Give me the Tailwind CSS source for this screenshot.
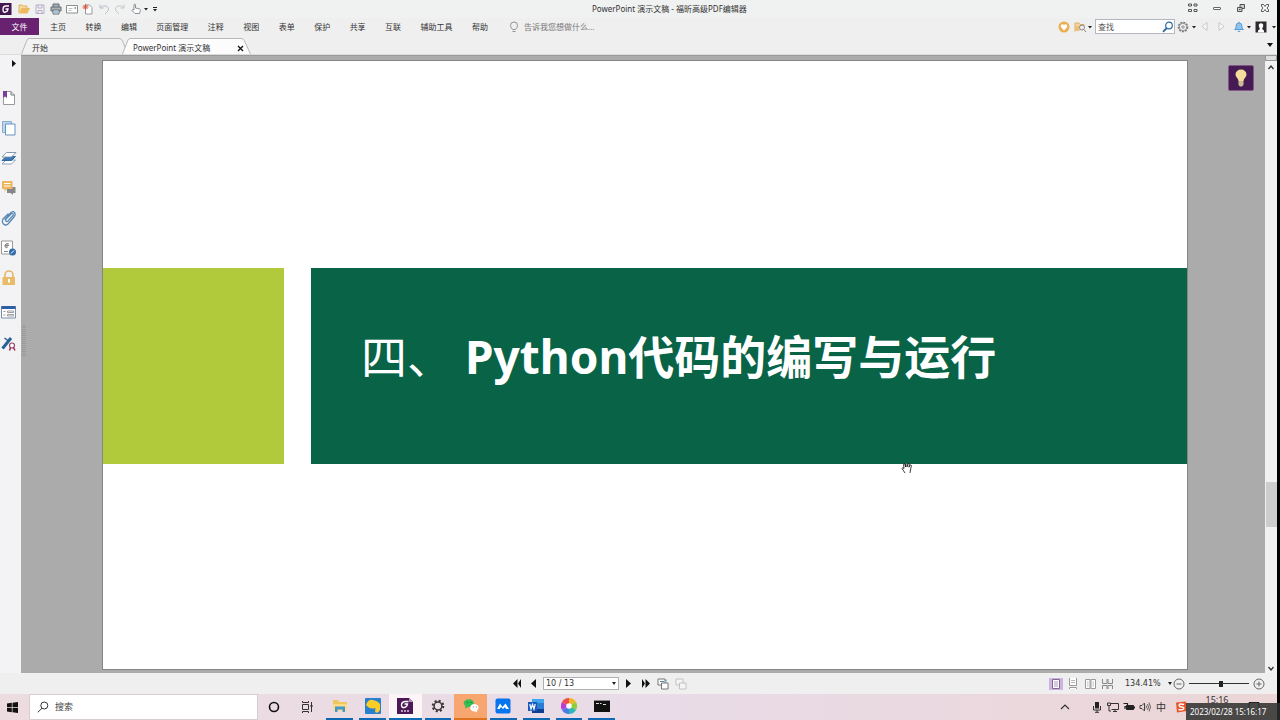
<!DOCTYPE html>
<html lang="zh-CN">
<head>
<meta charset="utf-8">
<meta name="viewport" content="width=device-width, initial-scale=1">
<title>PowerPoint 演示文稿 - 福昕高级PDF编辑器</title>
<script src="https://cdn.jsdelivr.net/npm/@tailwindcss/browser@4"></script>
</head>
<body class="bg-black font-['Noto_Sans','Noto_Sans_CJK_SC',sans-serif] text-[8px] leading-3 text-[#333]">
<div class="relative flex h-screen flex-col overflow-hidden pr-[3px]">

  <!-- Title bar -->
  <header class="flex h-[18px] shrink-0 items-center bg-[#f0f1f1]">
    <div class="flex w-[592px] shrink-0 items-center">
      <svg class="mr-1 h-3 w-3" viewBox="0 0 12 12"><rect width="11.500" height="12" fill="#43174f"/><path d="M9 3H6Q3 3 3 6.500T5.500 9Q7.500 9 8 6H5.500" fill="none" stroke="#fff" stroke-width="1.400"/></svg>
      <button class="flex w-4 justify-center" aria-label="打开"><svg class="h-3 w-3" viewBox="0 0 12 12"><path d="M1 10V2h3l1 1h4v2" fill="#f6d9a0" stroke="#e3b15c"/><path d="M1 10.500L3.500 5H12L9.500 10.500z" fill="#edb95e"/></svg></button>
      <button class="flex w-4 justify-center" aria-label="保存"><svg class="h-3 w-3" viewBox="0 0 12 12" fill="none" stroke="#b9adc8"><path d="M2 2h8v8.500H2z"/><path d="M4 2v3h4V2M4 10.500V7.500h4v3"/></svg></button>
      <button class="flex w-4 justify-center" aria-label="打印"><svg class="h-3 w-3" viewBox="0 0 12 12"><path d="M3 4V1h6v3M3 8H1V4h10v4H9" fill="#aab3b8" stroke="#606a70"/><path d="M3 7h6v4H3z" fill="#fff" stroke="#606a70"/><path d="M4 9h4" stroke="#3c82b8"/></svg></button>
      <button class="flex w-4 justify-center" aria-label="邮件"><svg class="h-3 w-3" viewBox="0 0 12 12"><path d="M.5 2.500h11v7.500H.5z" fill="#fff" stroke="#8d8d8d"/><path d="M2.500 5.500h4M2.500 7.500h3" stroke="#bbb"/><path d="M8.500 4h1.500v2H8.500z" fill="#99a"/></svg></button>
      <button class="flex w-4 justify-center" aria-label="新建"><svg class="h-3 w-3" viewBox="0 0 12 12"><path d="M3.500 2h4L10 4.500V11H3.500z" fill="#fff" stroke="#999"/><path d="M3.500 1v6M.5 4h6M1.500 2l4 4M5.500 2l-4 4" stroke="#d4563e"/></svg></button>
      <button class="flex w-4 justify-center" aria-label="撤销"><svg class="h-3 w-3" viewBox="0 0 12 12" fill="none" stroke="#b9bfc6"><path d="M2 1.500v3.500h3.500M2 5Q4.500 2 8 3t2 5L7 11"/></svg></button>
      <button class="flex w-4 justify-center" aria-label="重做"><svg class="h-3 w-3" viewBox="0 0 12 12" fill="none" stroke="#c3c8cd"><path d="M10 1.500v3.500H6.500M10 5Q7.500 2 4 3t-2 5L5 11"/></svg></button>
      <button class="flex w-4 justify-center" aria-label="手型工具"><svg class="h-3 w-3" viewBox="0 0 12 12"><path d="M4 7V1.500q1-1 1.500 0V5l4 .8q1 .4.800 1.700L9.500 10.500H5L2 7.500q0-1.500 2-.5z" fill="#fff" stroke="#707880" stroke-width=".8"/></svg></button>
      <svg class="h-1 w-[5px]" viewBox="0 0 5 4"><path d="M0 1h4L2 3.500z" fill="#222"/></svg>
      <svg class="ml-1 h-[5px] w-[5px]" viewBox="0 0 5 5"><path d="M0 .5h4" stroke="#222"/><path d="M0 2h4L2 4.500z" fill="#222"/></svg>
    </div>
    <h1 class="whitespace-nowrap">PowerPoint 演示文稿 - 福昕高级PDF编辑器</h1>
    <div class="ml-auto flex items-center pb-0.5">
      <button class="flex w-6 justify-center" aria-label="布局"><svg class="h-[10px] w-[10px]" viewBox="0 0 10 10" fill="none" stroke="#444"><path d="M.5 1h3v2h-3zM6 1h3v2H6zM.5 6.500h3v2h-3zM6 6.500h3v2H6z" stroke-width=".9"/></svg></button>
      <button class="flex w-6 justify-center" aria-label="最小化"><svg class="h-[10px] w-[10px]" viewBox="0 0 10 10"><rect x="1.500" y="4.500" width="7" height="2" rx=".5" fill="#fff" stroke="#555" stroke-width=".9"/></svg></button>
      <button class="flex w-6 justify-center" aria-label="还原"><svg class="h-[10px] w-[10px]" viewBox="0 0 10 10" fill="#ccc" stroke="#444" stroke-width=".9"><path d="M4 1.500h4.500v4H4z"/><path d="M1.500 4.500H6v4H1.500z"/><path d="M3 6.500h1.500"/></svg></button>
      <button class="flex w-6 justify-center" aria-label="关闭"><svg class="h-[10px] w-[10px]" viewBox="0 0 10 10"><path d="M1.500 1.500h2L5 3.500l1.500-2h2v1.500L7 5l1.500 2v1.500h-2L5 6.500l-1.500 2h-2V7L3 5 1.500 3z" fill="#fff" stroke="#444" stroke-width=".9"/></svg></button>
    </div>
  </header>

  <!-- Menu bar -->
  <div class="flex h-[19px] shrink-0 items-start bg-[#efefef]">
    <button class="h-[17px] w-[39px] bg-[#69226f] text-white">文件</button>
    <nav class="ml-[11px] flex h-[18px] w-[438px] items-center justify-between whitespace-nowrap" aria-label="菜单">
      <button>主页</button><button>转换</button><button>编辑</button><button>页面管理</button><button>注释</button><button>视图</button><button>表单</button><button>保护</button><button>共享</button><button>互联</button><button>辅助工具</button><button>帮助</button>
    </nav>
    <label class="ml-5 flex h-[18px] items-center gap-1 text-[#777]">
      <svg class="h-3 w-3" viewBox="0 0 12 12" fill="none" stroke="#888" stroke-width=".9"><path d="M4.500 8.500Q2.500 6.500 2.500 4.500a3.500 3.500 0 0 1 7 0q0 2-2 4zM4.500 10.500h3"/></svg>
      <input class="w-24 placeholder:text-[#777]" placeholder="告诉我您想做什么..." aria-label="告诉我您想做什么">
    </label>
    <div class="ml-auto flex h-[17px] items-center pr-px">
      <button aria-label="收藏"><svg class="mr-1 h-3 w-3" viewBox="0 0 12 12"><circle cx="6" cy="6" r="5.500" fill="#ebae50"/><path d="M6 9.500L3 6.300Q2.300 3.500 4.500 3.300 5.500 3.300 6 4.300 6.500 3.300 7.500 3.300 9.700 3.500 9 6.300z" fill="#fff"/></svg></button>
      <button aria-label="高级查找"><svg class="h-3 w-[13px]" viewBox="0 0 13 12"><path d="M1 10.500V2h4l1 1.500h4V5" fill="#f5d7a0" stroke="#ddb068"/><path d="M1.500 5h4v5h-4z" fill="#edbf6e"/><circle cx="8" cy="6.500" r="2.500" fill="#eee" stroke="#888"/><path d="M9.800 8.500l2.200 2.500" stroke="#888"/></svg></button>
      <svg class="mx-px h-1 w-1" viewBox="0 0 4 4"><path d="M0 1h4L2 3.500z" fill="#222"/></svg>
      <label class="ml-0.5 flex h-[15px] w-20 items-center border border-[#b5b8c2] bg-white">
        <input class="w-[66px] pl-0.5 placeholder:text-[#555]" placeholder="查找" aria-label="查找">
        <svg class="h-3 w-3 shrink-0" viewBox="0 0 12 12" fill="none" stroke="#2c6ca3"><circle cx="7" cy="4.500" r="3.300" stroke-width="1.200"/><path d="M4.700 7L1 10.800" stroke-width="1.800"/></svg>
      </label>
      <button class="ml-px" aria-label="设置"><svg class="h-[14px] w-[14px]" viewBox="0 0 14 14" fill="none" stroke="#777"><circle cx="7" cy="7" r="4.500" stroke-dasharray="2 1" stroke-width="1.600"/><circle cx="7" cy="7" r="3.700" fill="#eee" stroke-width=".7"/><circle cx="7" cy="7" r="1.200" stroke-width=".8"/></svg></button>
      <svg class="ml-0.5 h-1 w-1" viewBox="0 0 4 4"><path d="M0 1h4L2 3.500z" fill="#222"/></svg>
      <button class="flex w-[17px] justify-center" aria-label="上一个"><svg class="h-[9px] w-[7px]" viewBox="0 0 7 9"><path d="M6 .5v8L1 4.500z" fill="#f8f8f8" stroke="#c4c4c4" stroke-width=".9"/></svg></button>
      <button class="flex w-[17px] justify-center" aria-label="下一个"><svg class="h-[9px] w-[7px]" viewBox="0 0 7 9"><path d="M1 .5v8l5-4z" fill="#f8f8f8" stroke="#c4c4c4" stroke-width=".9"/></svg></button>
      <button class="ml-[3px]" aria-label="通知"><svg class="h-3 w-3" viewBox="0 0 12 12"><path d="M1.500 8.500L3 7V5a3 3 0 0 1 6 0v2l1.500 1.500z" fill="#8fc3ec" stroke="#4b95d0" stroke-width=".9"/><path d="M6 .7V2M4.800 10.300h2.400" stroke="#4b95d0"/></svg></button>
      <svg class="ml-0.5 mr-1 h-1 w-1" viewBox="0 0 4 4"><path d="M0 1h4L2 3.500z" fill="#222"/></svg>
      <button aria-label="账户"><svg class="h-3 w-3" viewBox="0 0 12 12"><path d="M.5.5h11v11H.5z" fill="#2e2a30"/><path d="M6 2.200Q8.500 2.200 8.200 5 8 6.500 7.300 7v1.200L9 9.500v2H3v-2l1.700-1.300V7Q4 6.500 3.800 5 3.500 2.200 6 2.200z" fill="#fff"/></svg></button>
      <svg class="ml-[5px] h-1 w-1" viewBox="0 0 4 4"><path d="M0 1h4L2 3.500z" fill="#222"/></svg>
    </div>
  </div>

  <!-- Document tabs -->
  <div class="flex h-[18px] shrink-0 items-end border-b border-[#dcdcdc] bg-[#efefef] pl-[21px]">
    <button class="relative h-4 w-[107px] pl-[11px] pt-1 text-left">
      <svg class="absolute inset-0 h-full w-full" viewBox="0 0 107 16" preserveAspectRatio="none"><path d="M.5 16L6 2Q7 .5 8 .5H98Q100 .5 101 2L107 16" fill="#f2f2f2" stroke="#b8b8b8"/></svg>
      <span class="relative block">开始</span>
    </button>
    <div class="relative -ml-[6px] flex h-4 w-[129px] items-center pl-[11px] pr-[7px] pt-1">
      <svg class="absolute inset-0 h-full w-full" viewBox="0 0 129 16" preserveAspectRatio="none"><path d="M.5 16L6 2Q7 .5 8 .5H119Q121 .5 122 2L128.500 16" fill="#fcfcfc" stroke="#b8b8b8"/></svg>
      <button class="relative whitespace-nowrap">PowerPoint 演示文稿</button>
      <button class="relative ml-auto" aria-label="关闭标签"><svg class="h-[7px] w-[7px]" viewBox="0 0 7 7"><path d="M1 1l5 5M6 1L1 6" stroke="#111" stroke-width="1.300"/></svg></button>
    </div>
    <button class="mb-[7px] ml-auto mr-1" aria-label="标签列表"><svg class="h-1 w-[6px]" viewBox="0 0 6 4"><path d="M0 0h6L3 4z" fill="#111"/></svg></button>
  </div>

  <!-- Workspace -->
  <div class="flex min-h-0 flex-1">
    <aside class="flex w-[21px] shrink-0 flex-col bg-[#f3f3f5]" aria-label="导航面板">
      <button class="flex h-7 items-start justify-end pr-[5px] pt-[5px]" aria-label="展开"><svg class="h-[7px] w-1" viewBox="0 0 4 7"><path d="M0 0v7l4-3.500z" fill="#111"/></svg></button>
      <button class="flex h-[30px] items-center pl-px" aria-label="书签"><svg class="h-4 w-4" viewBox="0 0 16 16"><path d="M2.500 1.500h7.500l3.500 3.500v9.500h-11z" fill="#fff" stroke="#999"/><path d="M10 1.500V5h3.500" fill="none" stroke="#777"/><path d="M2 1h4v7L4 6.500 2 8z" fill="#7a3f9a"/></svg></button>
      <button class="flex h-[30px] items-center pl-px" aria-label="页面"><svg class="h-4 w-4" viewBox="0 0 16 16"><path d="M1.500 1.500h9v11h-9z" fill="#bcd8ef" stroke="#86abcf"/><path d="M4.500 4h9.500v11H4.500z" fill="#fff" stroke="#6592bf"/></svg></button>
      <button class="flex h-[30px] items-center pl-px" aria-label="图层"><svg class="h-4 w-4" viewBox="0 0 16 16"><path d="M1 14l4-4h9.500l-4 4z" fill="#fff" stroke="#8aa4bb"/><path d="M1 10.500l4-4h9.500l-4 4z" fill="#3b77b5" stroke="#2e67a5"/><path d="M1 7l4.500-4.500h9.500L10.500 7z" fill="#fff" stroke="#8299ae"/></svg></button>
      <button class="flex h-[30px] items-center pl-px" aria-label="注释"><svg class="h-4 w-4" viewBox="0 0 16 16"><path d="M6 7h8.500v6H12v2l-2.500-2H6z" fill="#878787"/><path d="M1 1h10.500v8H6l-2.500 2.500V9H1z" fill="#edb55c"/><path d="M3 3.500h6.500M3 6h6.500" stroke="#fff"/></svg></button>
      <button class="flex h-[30px] items-center pl-px" aria-label="附件"><svg class="h-4 w-4" viewBox="0 0 16 16" fill="none" stroke="#5b8ab8" stroke-width="1.300" stroke-linecap="round"><path d="M4 9.500l5.500-6.500q2.500-2.500 4-.5t-.5 4.500l-6 7q-2.500 2-4.500 0t-.5-5L7 4M5 11q1 1 2 0l5-5.500q.8-1.500-.3-2t-1.700.5L5 9q-.8 1 0 2z"/></svg></button>
      <button class="flex h-[30px] items-center pl-px" aria-label="签名"><svg class="h-4 w-4" viewBox="0 0 16 16"><path d="M.5 1h11v13H.5z" fill="#fff" stroke="#999"/><path d="M8 4q-3-1.500-4 1t2 3M4 5.500h4M6 4v4M3 11.500h4" fill="none" stroke="#777" stroke-width=".9"/><circle cx="11.500" cy="12" r="3.500" fill="#326da8"/><path d="M10 13.500l3-3" stroke="#fff"/></svg></button>
      <button class="flex h-[30px] items-center pl-px" aria-label="安全"><svg class="h-4 w-4" viewBox="0 0 16 16"><path d="M4 8V5a4 4 0 0 1 8 0v3" fill="none" stroke="#e4b768" stroke-width="1.600"/><path d="M1.500 7h12.500v8H1.500z" fill="#eabb68"/><path d="M7 9h2v3.500H7z" fill="#fff"/></svg></button>
      <button class="mt-1 flex h-[30px] items-center pl-px" aria-label="表单域"><svg class="h-4 w-4" viewBox="0 0 16 16"><path d="M.5 2.500h14v11.500H.5z" fill="#fff" stroke="#7e8fa8"/><path d="M.5 2h14v3H.5z" fill="#2e5fa4"/><path d="M2.500 7.500h2M2.500 11h2" stroke="#999"/><path d="M6.500 7h6v1.500h-6zM6.500 10.500h6V12h-6z" fill="none" stroke="#888" stroke-width=".8"/></svg></button>
      <button class="mt-px flex h-[30px] items-center pl-px" aria-label="数字签名"><svg class="h-4 w-4" viewBox="0 0 16 16"><path d="M1.500 13.500L10 3" stroke="#2a6098" stroke-width="3"/><path d="M3.500 3l4 3" stroke="#2a6098" stroke-width="1.500"/><circle cx="11" cy="10.500" r="2.500" fill="#fff" stroke="#96476c" stroke-width="1.200"/><path d="M9.500 12.500l-1 3M12.500 12.500l1.500 3" stroke="#a02c58" stroke-width="1.500"/></svg></button>
    </aside>

    <main class="relative flex min-w-0 flex-1 border-t border-[#999] bg-[#ababab] pb-1 pl-[82px] pr-[78px] pt-[5px]">
      <svg class="absolute left-px top-[269px] h-8 w-1" viewBox="0 0 4 32"><path d="M1 0v32M3 0v32" stroke="#888" stroke-dasharray="1 1"/></svg>
      <!-- Slide -->
      <article class="grid min-w-0 flex-1 grid-cols-[181fr_27fr_876fr] grid-rows-[207fr_196fr_205fr] bg-white outline outline-[#858585]">
        <div class="col-start-1 row-start-2 bg-[#b0ca3c]"></div>
        <div class="col-start-3 row-start-2 flex items-center bg-[#086347] pb-5 pl-[50px]">
          <h2 class="flex whitespace-nowrap text-[46px] leading-[60px] text-white"><span class="w-[104px]">四、</span><span class="font-bold">Python代码的编写与运行</span></h2>
        </div>
      </article>
      <button class="absolute right-[11px] top-[9px] flex h-[26px] w-[26px] items-center justify-center rounded-xs border border-[#84568c] bg-[#461a52]" aria-label="提示"><svg class="h-[18px] w-3" viewBox="0 0 12 18"><path d="M3.500 12Q3.300 10 1.800 8.500Q.5 7 .5 5.500a5.500 5.000 0 0 1 11 0Q11.500 7 10.200 8.500 8.700 10 8.500 12z" fill="#f3dc9c"/><path d="M3.500 12h5v4L7 17.500H5L3.500 16z" fill="#c9bb97"/></svg></button>
      <svg class="absolute left-[880px] top-[406px] h-3 w-3" viewBox="0 0 12 12"><path d="M4 11L1 6.500q0-1.500 2 0L2.500 2.500q1-1 1.500 0L4.500 5V1.500q1-1 1.500 0V5L7 1.700q1-.7 1.400.3L8 5.200l1-2q1-.8 1.400.3L9.500 8 9 11" fill="#fff" stroke="#111" stroke-width=".8"/></svg>
    </main>

    <div class="flex w-3 shrink-0 flex-col items-center bg-[#f1f1f1]">
      <div class="h-[6px] w-full border border-[#999] bg-[#ddd]"></div>
      <button class="py-1" aria-label="向上滚动"><svg class="h-[5px] w-[6px]" viewBox="0 0 6 5"><path d="M.5 4L3 1l2.500 3" fill="none" stroke="#333" stroke-width="1.300"/></svg></button>
      <div class="mt-[408px] h-[45px] w-[11px] bg-[#cdcdcd]"></div>
      <button class="mt-auto pb-0.5" aria-label="向下滚动"><svg class="h-[5px] w-[6px]" viewBox="0 0 6 5"><path d="M.5 1L3 4l2.500-3" fill="none" stroke="#333" stroke-width="1.300"/></svg></button>
    </div>
  </div>

  <!-- Status bar -->
  <div class="flex h-[21px] shrink-0 items-center bg-[#f0efef] pl-[509px] font-['DejaVu_Sans',sans-serif]">
    <button class="flex w-4 justify-center" aria-label="第一页"><svg class="h-[9px] w-[9px]" viewBox="0 0 9 9"><path d="M4.500 0v9L0 4.500zM8 0v9L5 4.500z" fill="#111"/></svg></button>
    <button class="flex w-4 justify-center" aria-label="上一页"><svg class="h-[9px] w-[5px]" viewBox="0 0 5 9"><path d="M5 0v9L0 4.500z" fill="#111"/></svg></button>
    <div class="relative ml-0.5">
      <select class="block h-[13px] w-[76px] appearance-none border border-[#b0b0b0] bg-white pl-0.5 leading-[11px]" aria-label="页码"><option>10 / 13</option></select>
      <svg class="pointer-events-none absolute right-[3px] top-[5px] h-[3px] w-1" viewBox="0 0 4 3"><path d="M0 0h4L2 3z" fill="#222"/></svg>
    </div>
    <button class="flex w-[18px] justify-center" aria-label="下一页"><svg class="h-[9px] w-[5px]" viewBox="0 0 5 9"><path d="M0 0v9l5-4.500z" fill="#111"/></svg></button>
    <button class="flex w-4 justify-center" aria-label="最后一页"><svg class="h-[9px] w-[9px]" viewBox="0 0 9 9"><path d="M1 0v9l3-4.500zM4.500 0v9L9 4.500z" fill="#111"/></svg></button>
    <button class="ml-1" aria-label="上一视图"><svg class="h-3 w-3" viewBox="0 0 12 12" fill="#fff" stroke="#777"><path d="M1 1h7v6H1z"/><path d="M4.500 5h6.500v6H4.500z"/><path d="M3 3.500h4M9 1.500v2" stroke="#4d92a8"/></svg></button>
    <button class="ml-[6px]" aria-label="下一视图"><svg class="h-3 w-3" viewBox="0 0 12 12" fill="#f4f4f4" stroke="#c2c2c2"><path d="M1 1h7v6H1z"/><path d="M4.500 5h6.500v6H4.500z"/></svg></button>

    <div class="ml-auto flex items-center pr-3">
      <button class="mr-px flex h-3 w-[14px] items-center justify-center bg-[#cdb5e2]" aria-label="单页"><svg class="h-[10px] w-2" viewBox="0 0 8 10"><path d="M.5.5h7v9h-7z" fill="#fff" stroke="#80669a"/><path d="M2 3h4M2 5h4M2 7h4" stroke="#9580aa" stroke-width=".8"/></svg></button>
      <button class="flex w-[17px] justify-center" aria-label="连续"><svg class="h-[11px] w-2" viewBox="0 0 8 11" fill="#fff" stroke="#999"><path d="M.5 0v7.500h7V0M.5 11V9.500h7V11"/><path d="M2 2.500h4M2 4.500h4" stroke-width=".7"/></svg></button>
      <button class="flex w-[18px] justify-center" aria-label="双页"><svg class="h-[10px] w-[11px]" viewBox="0 0 11 10" fill="#fff" stroke="#999"><path d="M.5.500h4.500v9H.5zM6 .500h4.500v9H6z"/><path d="M2 3h1.500M2 5h1.500M2 7h1.500M7.500 3H9M7.500 5H9M7.500 7H9" stroke-width=".7"/></svg></button>
      <button class="flex w-4 justify-center" aria-label="双页连续"><svg class="h-[10px] w-[11px]" viewBox="0 0 11 10" fill="none" stroke="#888"><path d="M.5 0v4.500H5V0M6 0v4.500h4.500V0M.5 10V6.500H5V10M6 10V6.500h4.500V10"/></svg></button>
      <select class="ml-[10px] w-10 appearance-none text-[8px] leading-3" aria-label="缩放比例"><option>134.41%</option></select>
      <svg class="ml-[3px] mr-px h-[3px] w-1" viewBox="0 0 4 3"><path d="M0 0h4L2 3z" fill="#222"/></svg>
      <button aria-label="缩小"><svg class="h-3 w-3" viewBox="0 0 12 12" fill="none" stroke="#666"><circle cx="6" cy="6" r="5"/><path d="M3.500 6h5"/></svg></button>
      <input type="range" min="0" max="100" value="53" aria-label="缩放" class="mx-1 h-[7px] w-[60px] appearance-none bg-[linear-gradient(#333,#333)] bg-[length:100%_1px] bg-center bg-no-repeat [&::-webkit-slider-thumb]:h-[6px] [&::-webkit-slider-thumb]:w-1 [&::-webkit-slider-thumb]:appearance-none [&::-webkit-slider-thumb]:bg-[#222]">
      <button aria-label="放大"><svg class="h-3 w-3" viewBox="0 0 12 12" fill="none" stroke="#666"><circle cx="6" cy="6" r="5"/><path d="M3.500 6h5M6 3.500v5"/></svg></button>
    </div>
  </div>

  <!-- Taskbar -->
  <footer class="flex h-[26px] shrink-0 bg-linear-to-r from-[#eddcdf] via-[#e9dce8] to-[#ebd5d6]">
    <button class="flex w-[29px] items-center justify-center pr-1" aria-label="开始菜单"><svg class="h-[11px] w-[11px]" viewBox="0 0 11 11"><path d="M0 1.500L4.800.8v4.400H0zM5.500.7L11 0v5.200H5.500zM0 5.900h4.800v4.400L0 9.600zM5.500 5.900H11V11l-5.500-.7z" fill="#111"/></svg></button>
    <label class="flex w-[229px] items-center gap-[6px] border border-[#d6cdd0] bg-white pl-[7px]">
      <svg class="h-3 w-3" viewBox="0 0 12 12" fill="none" stroke="#333"><circle cx="7.300" cy="4.500" r="3.500"/><path d="M5 7.200L.8 11.300"/></svg>
      <input class="min-w-0 flex-1 text-[9px] placeholder:text-[#444]" placeholder="搜索" aria-label="搜索">
    </label>
    <div class="grid w-[360px] grid-cols-11">
      <button class="flex items-center justify-center" aria-label="Cortana"><svg class="h-3 w-3" viewBox="0 0 12 12"><circle cx="6" cy="6" r="4.500" fill="none" stroke="#111" stroke-width="1.600"/></svg></button>
      <button class="flex items-center justify-center" aria-label="任务视图"><svg class="h-3 w-3" viewBox="0 0 12 12" fill="none" stroke="#333"><path d="M1.500 3.500h6v5h-6zM1.500 0v1.500h6V0M1.500 12v-1.500h6V12M10.500 1v10"/><path d="M9.500 4h2v2h-2z" fill="#333" stroke="none"/></svg></button>
      <button class="mx-[3px] flex items-center justify-center border-b-2 border-[#0f69b5]" aria-label="文件资源管理器"><svg class="h-4 w-4" viewBox="0 0 16 16"><path d="M1 2h5l1 2h8v9H1z" fill="#f0c75c"/><path d="M1 6h14v7H1z" fill="#fbdc84"/><path d="M3 14V8.500h10V14h-2.500v-2.500h-5V14z" fill="#4596d1"/></svg></button>
      <button class="mx-[3px] flex items-center justify-center border-b-2 border-[#0f69b5]" aria-label="搜索工具"><svg class="h-4 w-4" viewBox="0 0 16 16"><rect width="16" height="16" rx="1" fill="#287fce"/><path d="M1 7Q3 1 8 2t7 4v6q-2 4-5 2l.5-4Q5 12 1 7z" fill="#f9ce28"/></svg></button>
      <button class="flex items-center justify-center border-b-2 border-[#0f69b5] bg-[#fbf5f8]" aria-label="福昕PDF编辑器"><svg class="h-4 w-4" viewBox="0 0 16 16"><path d="M0 0h12l4 4v12H0z" fill="#4c1956"/><path d="M11.500 3.500H8Q4.500 4 4.500 7T7.500 9.500Q10 9 10.500 6H7.500" fill="none" stroke="#fff" stroke-width="1.400"/><path d="M12 0v4h4z" fill="#b58dba"/><path d="M4 13h8" stroke="#d9c7df" stroke-width="1.600" stroke-dasharray="2 1"/></svg></button>
      <button class="mx-[3px] flex items-center justify-center border-b-2 border-[#0f69b5]" aria-label="设置"><svg class="h-[14px] w-[14px]" viewBox="0 0 14 14" fill="none" stroke="#3b3434"><circle cx="7" cy="7" r="5.300" stroke-width="2" stroke-dasharray="2.080 2.080"/><circle cx="7" cy="7" r="3.900" stroke-width="1.500"/></svg></button>
      <button class="flex items-center justify-center border-b-2 border-[#df731e] bg-[#f6a66e]" aria-label="微信"><svg class="h-4 w-4" viewBox="0 0 16 16"><path d="M2 10.500l.5-2.500Q0 6 1 3.500 3 1 6.500 1.200 11 2 11 6 10 9.500 5.500 9z" fill="#35bc55"/><path d="M14 14.500l.2-2Q16.500 10 15 7.500 12.500 5 9 6.500 6 9 8 12q2 2 4.500 1.500z" fill="#fff"/><path d="M9.800 9h1M12.800 9h1" stroke="#777"/><path d="M4 4.500h1M7.500 4.500h1" stroke="#136f2b"/></svg></button>
      <button class="mx-[3px] flex items-center justify-center border-b-2 border-[#0f69b5]" aria-label="腾讯会议"><svg class="h-4 w-4" viewBox="0 0 16 16"><rect x=".5" y=".5" width="15" height="15" rx="2" fill="#0874ed"/><path d="M2 11l3-5.500L7.500 9l3-3.500L14 11h-3l-1-2-2 2-2-2-1.500 2z" fill="#fff"/></svg></button>
      <button class="mx-[3px] flex items-center justify-center border-b-2 border-[#0f69b5]" aria-label="Word"><svg class="h-4 w-4" viewBox="0 0 16 16"><path d="M4 1h12v14H4z" fill="#2b7cd3"/><path d="M4 1h12v4H4z" fill="#41a5ee"/><path d="M4 11h12v4H4z" fill="#103f91"/><path d="M0 4h9v9H0z" fill="#185abd"/><path d="M1.800 6l1.200 5 1.500-4.500L6 11l1.200-5" fill="none" stroke="#fff" stroke-width="1.200"/></svg></button>
      <button class="mx-[3px] flex items-center justify-center border-b-2 border-[#0f69b5]" aria-label="浏览器"><svg class="h-4 w-4" viewBox="0 0 16 16"><path d="M8 8V0a8 8 0 0 1 7 4z" fill="#efb72a"/><path d="M8 8l7-4a8 8 0 0 1 0 8z" fill="#8fce3b"/><path d="M8 8l7 4a8 8 0 0 1-7 4z" fill="#2fb8b5"/><path d="M8 8v8a8 8 0 0 1-7-4z" fill="#4a7be9"/><path d="M8 8l-7 4a8 8 0 0 1 0-8z" fill="#bb3ed0"/><path d="M8 8L1 4a8 8 0 0 1 7-4z" fill="#f34a4b"/><circle cx="8" cy="8" r="2.800" fill="#fff"/></svg></button>
      <button class="mx-[3px] flex items-center justify-center border-b-2 border-[#0f69b5]" aria-label="命令提示符"><svg class="h-4 w-4" viewBox="0 0 16 16"><path d="M0 2h16v12H0z" fill="#111"/><path d="M0 2.500h16" stroke="#888"/><path d="M2 5.500h3M6 5.500h1.500M9 6.500h3" stroke="#ddd"/></svg></button>
    </div>

    <div class="ml-auto flex items-center pr-[17px]">
      <button class="mr-[18px]" aria-label="显示隐藏的图标"><svg class="h-3 w-3" viewBox="0 0 12 12"><path d="M2 8l4-4 4 4" fill="none" stroke="#333" stroke-width="1.200"/></svg></button>
      <button class="flex w-4 justify-center" aria-label="麦克风"><svg class="h-3 w-3" viewBox="0 0 12 12"><path d="M4 1h4v6.500H4z" fill="#222"/><path d="M2.500 5v4h7V5M6 9v2.500M4 11.300h4" fill="none" stroke="#333"/></svg></button>
      <button class="flex w-4 justify-center" aria-label="网络"><svg class="h-3 w-3" viewBox="0 0 12 12" fill="none" stroke="#333"><path d="M3.500 2.500h8v6H4.500M6 10.500h4M8 8.500v2"/><path d="M.5 2h3v2.500h-3zM2 4.500V10h2"/></svg></button>
      <button class="flex w-4 justify-center" aria-label="电池"><svg class="h-3 w-3" viewBox="0 0 12 12"><path d="M3.500 4.500h7v4h-7z" fill="#222" stroke="#222"/><path d="M11.500 5.500v2" stroke="#222"/><path d="M.5 2.500h4v3H2V8" fill="none" stroke="#222" stroke-width="1.200"/></svg></button>
      <button class="flex w-4 justify-center" aria-label="音量"><svg class="h-3 w-3" viewBox="0 0 12 12" fill="none" stroke="#444"><path d="M1 4.500h2L5.500 2v8L3 7.500H1z"/><path d="M7 4.500q1 1.500 0 3M8.500 3q2 3 0 6M10 1.500q3 4.500 0 9" stroke-width=".8"/></svg></button>
      <button class="flex w-4 justify-center text-[10px]">中</button>
      <button class="ml-[6px]" aria-label="搜狗输入法"><svg class="h-3 w-3" viewBox="0 0 12 12"><path d="M1 1.500L11 .5l.7 9.500L2 11.500z" fill="#e9562a"/><path d="M9 3.500Q4 2 4 4.500 4.500 6 7 6q2.500.5 1.500 2Q7 9.500 3.500 8.500" fill="none" stroke="#fff" stroke-width="1.400"/></svg></button>
      <time class="ml-[11px] w-[38px] self-start pt-px text-center text-[9px] leading-[10px]">15:16</time>
      <button class="ml-3" aria-label="操作中心"><svg class="h-3 w-3" viewBox="0 0 12 12"><path d="M1 1.500h10v7.500H8L6 11V9H1z" fill="none" stroke="#222"/></svg></button>
    </div>
  </footer>

  <!-- Recording timestamp -->
  <div class="absolute bottom-0 right-0 flex h-[17px] w-[94px] items-center whitespace-nowrap bg-[#2e2e2e]/85 pl-1 text-[8px] leading-[10px] text-white">2023/02/28 15:16:17</div>
</div>
</body>
</html>
